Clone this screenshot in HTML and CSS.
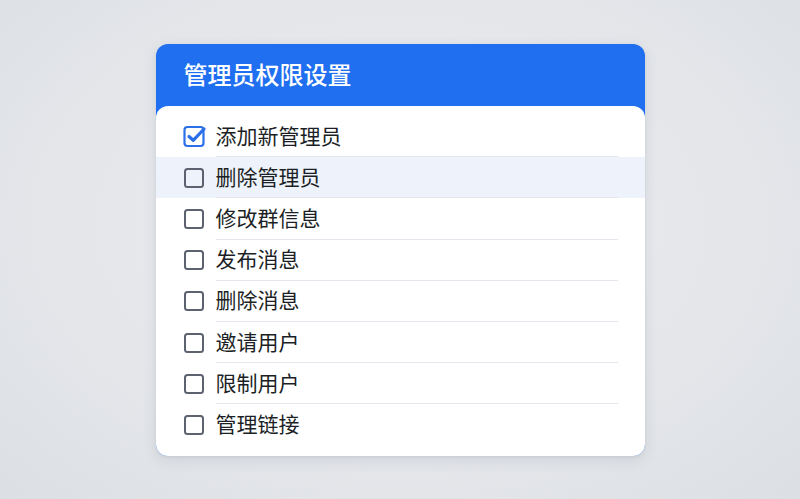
FILE: index.html
```html
<!DOCTYPE html>
<html lang="zh">
<head>
<meta charset="utf-8">
<link rel="stylesheet" href="styles.css">
</head>
<body>
<div class="page">
  <div class="card">
    <div class="header">管理员权限设置</div>
    <div class="list">
      <div class="row">
        <span class="box checked">
          <svg viewBox="0 0 24 24" width="24" height="24"><rect x="1.5" y="3" width="19" height="19" rx="3" fill="none" stroke="#2b6fe9" stroke-width="2.2"/><path d="M6 12.5 L10.2 16.3 L21 5" fill="none" stroke="#2b6fe9" stroke-width="3.2" stroke-linecap="round" stroke-linejoin="round"/></svg>
        </span>
        <span class="label">添加新管理员</span>
      </div>
      <div class="row hover">
        <span class="box"></span>
        <span class="label">删除管理员</span>
      </div>
      <div class="row">
        <span class="box"></span>
        <span class="label">修改群信息</span>
      </div>
      <div class="row">
        <span class="box"></span>
        <span class="label">发布消息</span>
      </div>
      <div class="row">
        <span class="box"></span>
        <span class="label">删除消息</span>
      </div>
      <div class="row">
        <span class="box"></span>
        <span class="label">邀请用户</span>
      </div>
      <div class="row">
        <span class="box"></span>
        <span class="label">限制用户</span>
      </div>
      <div class="row last">
        <span class="box"></span>
        <span class="label">管理链接</span>
      </div>
    </div>
  </div>
</div>
</body>
</html>
```

FILE: styles.css
```css
html, body {
  margin: 0;
  padding: 0;
}
body {
  width: 800px;
  height: 499px;
  overflow: hidden;
  background: radial-gradient(ellipse at 50% 45%, #eceef1 0%, #e4e6ea 60%, #dcdfe3 100%);
  font-family: "Noto Sans CJK SC", "Noto Sans", sans-serif;
}
.page {
  display: flex;
  justify-content: center;
  padding-top: 44px;
}
.card {
  width: 489px;
  background: #1f6ff0;
  border-radius: 12px;
  overflow: hidden;
  box-shadow: 0 4px 14px rgba(60, 70, 90, 0.12), 0 1px 3px rgba(60, 70, 90, 0.08);
}
.header {
  height: 62px;
  box-sizing: border-box;
  padding: 0 0 4px 28px;
  display: flex;
  align-items: center;
  color: #ffffff;
  font-size: 24px;
  font-weight: 500;
}
.list {
  background: #ffffff;
  border-radius: 12px 12px 0 0;
  padding: 10px 0 10px;
}
.row {
  height: 41.2px;
  display: flex;
  align-items: stretch;
  padding: 0 27px 0 28px;
}
.row.hover {
  background: #eef3fb;
}
.box {
  width: 20px;
  height: 20px;
  box-sizing: border-box;
  border: 2px solid #5c6270;
  border-radius: 3.5px;
  align-self: center;
  margin-right: 12px;
  flex: none;
  position: relative;
}
.box.checked {
  border: none;
}
.box.checked svg {
  position: absolute;
  left: -1px;
  top: -3px;
}
.label {
  flex: 1;
  display: flex;
  align-items: center;
  box-sizing: border-box;
  padding-bottom: 3px;
  font-size: 21px;
  color: #1c1f26;
  border-bottom: 1px solid #e3e6ec;
}
.row.last .label {
  border-bottom: none;
}
```
